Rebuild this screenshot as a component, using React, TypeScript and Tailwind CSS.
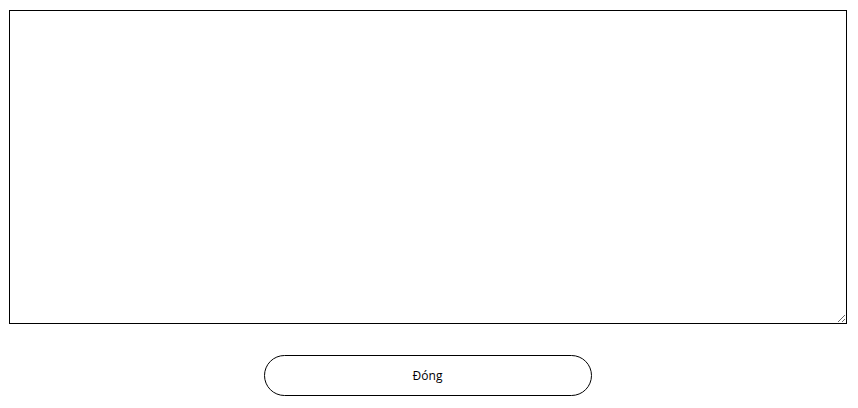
export default function App() {
    return (
        <div className="w-[858px] h-[408px] bg-white pl-[9px] pt-[10px]" style={{ fontFamily: '"Open Sans", "Noto Sans", sans-serif' }}>
            <textarea className="block w-[838px] h-[314px] border border-black bg-white outline-none resize" />
            <div className="flex justify-center w-[838px] mt-[31px] pr-[1px]">
                <button className="w-[328px] h-[41px] rounded-full border border-black bg-white text-[12px] text-black">
                    Đóng
                </button>
            </div>
        </div>
    );
}
